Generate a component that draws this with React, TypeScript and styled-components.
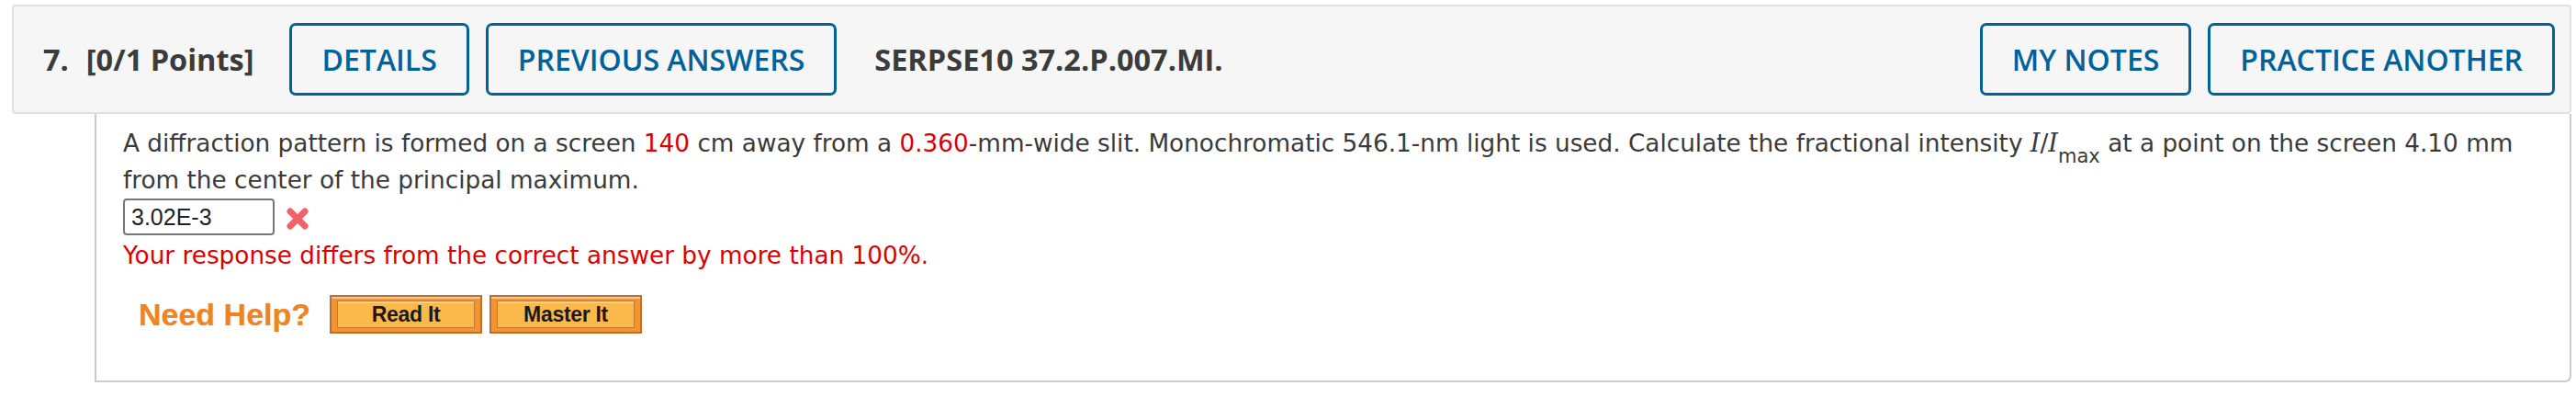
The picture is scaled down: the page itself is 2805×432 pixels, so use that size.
import React from 'react';
import styled, { createGlobalStyle } from 'styled-components';

const GlobalStyle = createGlobalStyle`
  html, body {
    margin: 0;
    padding: 0;
    background: #ffffff;
  }
`;

const Page = styled.div`
  padding: 5px 5px 0 13px;
`;

const Header = styled.div`
  display: flex;
  align-items: center;
  padding: 18px 16px 18px 32px;
  background: #f6f6f6;
  border: 2px solid #e1e1e1;
  border-radius: 4px;
  font-family: 'Open Sans', 'Liberation Sans', sans-serif;
`;

const Title = styled.span<{ $gap?: number }>`
  font-size: 32.5px;
  font-weight: 700;
  color: #3b3b3b;
  margin-right: ${({ $gap }) => $gap ?? 0}px;
  white-space: nowrap;
`;

const ButtonGroup = styled.div<{ $push?: boolean }>`
  display: flex;
  gap: 18px;
  margin-left: ${({ $push }) => ($push ? 'auto' : '0')};
  margin-right: ${({ $push }) => ($push ? '0' : '41px')};
`;

const OutlineButton = styled.button`
  height: 79px;
  padding: 0 32px;
  background: transparent;
  border: 3px solid #00629b;
  border-radius: 7px;
  color: #00629b;
  font-family: 'Open Sans', 'Liberation Sans', sans-serif;
  font-size: 32px;
  font-weight: 600;
  white-space: nowrap;
  cursor: pointer;
`;

const Body = styled.div`
  margin-left: 90px;
  border: 2px solid #cccccc;
  border-top: none;
  border-radius: 0 0 7px 0;
  padding: 12px 30px 51px 29px;
  font-family: 'DejaVu Sans', Verdana, sans-serif;
  font-size: 26.3px;
  color: #3a3a3a;
`;

const Question = styled.p`
  margin: 0;
  line-height: 40px;
`;

const Given = styled.span`
  color: #dd0000;
`;

const MathVar = styled.span`
  font-family: 'DejaVu Serif', 'Liberation Serif', serif;
  font-style: italic;
  font-size: 27px;
`;

const Sub = styled.sub`
  font-size: 21px;
  vertical-align: -12px;
  line-height: 0;
`;

const AnswerRow = styled.div`
  display: flex;
  align-items: center;
  gap: 11px;
`;

const AnswerInput = styled.input`
  box-sizing: border-box;
  width: 165px;
  height: 40px;
  padding: 0 7px;
  border: 2px solid #777777;
  border-radius: 4px;
  font-family: 'Liberation Sans', Arial, sans-serif;
  font-size: 25px;
  color: #222222;
  background: #ffffff;
  outline: none;
`;

const WrongMark = styled.svg`
  width: 28px;
  height: 28px;
  margin-top: 4px;
`;

const Feedback = styled.div`
  color: #dd0000;
  line-height: 40px;
  margin-top: 2px;
`;

const HelpRow = styled.div`
  display: flex;
  align-items: center;
  margin: 23px 0 0 17px;
`;

const HelpLabel = styled.span`
  font-family: 'Liberation Sans', Arial, sans-serif;
  font-size: 34px;
  font-weight: 700;
  color: #ee8424;
  margin-right: 21px;
  text-shadow: 0 0 1px rgba(238, 132, 36, 0.5);
`;

const HelpButton = styled.button`
  box-sizing: border-box;
  width: 166px;
  height: 42px;
  margin-right: 8px;
  padding: 4px 6px;
  background: #f39332;
  border: 2px solid #b7722f;
  box-shadow: inset 0 2px 0 #fbc58a;
  cursor: pointer;
  display: flex;
`;

const HelpButtonFace = styled.span`
  flex: 1;
  display: flex;
  align-items: center;
  justify-content: center;
  background: #fbb84b;
  border: 1px solid #c17a36;
  box-shadow: inset 0 2px 0 #fdd08a;
  font-family: 'Liberation Sans', Arial, sans-serif;
  font-size: 23px;
  font-weight: 700;
  color: #1a1a1a;
  letter-spacing: -0.3px;
`;

export default function App() {
  return (
    <Page>
      <GlobalStyle />
      <Header>
        <Title $gap={19}>7.</Title>
        <Title $gap={39}>[0/1 Points]</Title>
        <ButtonGroup>
          <OutlineButton>DETAILS</OutlineButton>
          <OutlineButton>PREVIOUS ANSWERS</OutlineButton>
        </ButtonGroup>
        <Title>SERPSE10 37.2.P.007.MI.</Title>
        <ButtonGroup $push>
          <OutlineButton>MY NOTES</OutlineButton>
          <OutlineButton>PRACTICE ANOTHER</OutlineButton>
        </ButtonGroup>
      </Header>
      <Body>
        <Question>
          A diffraction pattern is formed on a screen <Given>140</Given> cm away from a{' '}
          <Given>0.360</Given>-mm-wide slit. Monochromatic 546.1-nm light is used. Calculate the
          fractional intensity <MathVar>I</MathVar>/<MathVar>I</MathVar>
          <Sub>max</Sub> at a point on the screen 4.10 mm from the center of the principal maximum.
        </Question>
        <AnswerRow>
          <AnswerInput readOnly value="3.02E-3" />
          <WrongMark viewBox="0 0 28 28">
            <path
              d="M6 6 L22 22 M22 6 L6 22"
              stroke="#f26367"
              strokeWidth="7"
              strokeLinecap="round"
            />
          </WrongMark>
        </AnswerRow>
        <Feedback>Your response differs from the correct answer by more than 100%.</Feedback>
        <HelpRow>
          <HelpLabel>Need Help?</HelpLabel>
          <HelpButton>
            <HelpButtonFace>Read It</HelpButtonFace>
          </HelpButton>
          <HelpButton>
            <HelpButtonFace>Master It</HelpButtonFace>
          </HelpButton>
        </HelpRow>
      </Body>
    </Page>
  );
}
